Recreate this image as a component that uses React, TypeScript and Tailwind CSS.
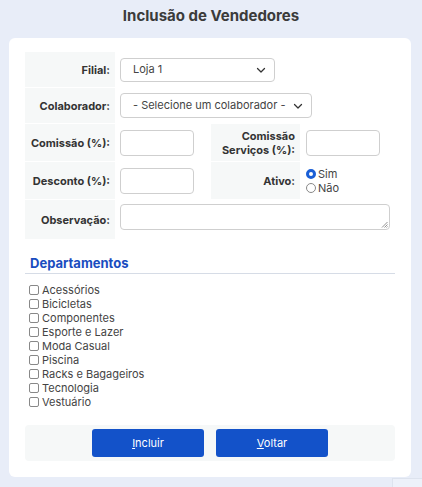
import React from 'react';

const DEPARTAMENTOS = [
  'Acessórios',
  'Bicicletas',
  'Componentes',
  'Esporte e Lazer',
  'Moda Casual',
  'Piscina',
  'Racks e Bagageiros',
  'Tecnologia',
  'Vestuário',
];

const Chevron = () => (
  <svg width="12" height="12" viewBox="0 0 24 24" fill="none" stroke="#333" strokeWidth="2.5" strokeLinecap="round" strokeLinejoin="round">
    <path d="M5 9l7 7 7-7" />
  </svg>
);

const Label: React.FC<{ children: React.ReactNode; className?: string }> = ({ children, className = '' }) => (
  <div className={`bg-[#f6f8f8] flex items-center justify-end pr-[5px] text-right font-bold text-[11px] leading-[14px] text-[#333] ${className}`}>
    {children}
  </div>
);

const App: React.FC = () => {
  return (
    <div className="relative min-h-[487px] w-[422px] bg-[#e8edf8] pt-[5px] font-['Inter',sans-serif] text-[#333]">
      <h1 className="text-center text-[15px] font-bold leading-[22px] text-[#3b3b3b]">Inclusão de Vendedores</h1>

      <div className="ml-[9px] mr-[11px] mt-[11px] rounded-md bg-white px-4 pt-[14px] pb-4">
        {/* Formulário */}
        <div className="grid grid-cols-[90px_96px_89px_1fr] gap-y-px">
          <Label className="h-[35px]">Filial:</Label>
          <div className="col-span-3 flex items-center pl-[5px]">
            <div className="flex h-[24px] w-[155px] items-center justify-between rounded border border-[#cfcfcf] pl-3 pr-[7px] text-[11px] text-[#444]">
              <span>Loja 1</span>
              <Chevron />
            </div>
          </div>

          <Label className="h-[35px]">Colaborador:</Label>
          <div className="col-span-3 flex items-center pl-[5px]">
            <div className="flex h-[25px] w-[192px] items-center justify-between rounded border border-[#cfcfcf] pl-3 pr-[7px] text-[11px] text-[#444]">
              <span>- Selecione um colaborador -</span>
              <Chevron />
            </div>
          </div>

          <Label className="h-[37px]">Comissão (%):</Label>
          <div className="flex items-center pl-[5px]">
            <div className="h-[26px] w-[74px] rounded border border-[#cfcfcf]" />
          </div>
          <Label className="h-[37px]">
            <span>
              Comissão
              <br />
              Serviços (%):
            </span>
          </Label>
          <div className="flex items-center pl-[6px]">
            <div className="h-[26px] w-[74px] rounded border border-[#cfcfcf]" />
          </div>

          <Label className="h-[37px]">Desconto (%):</Label>
          <div className="flex items-center pl-[5px]">
            <div className="h-[26px] w-[74px] rounded border border-[#cfcfcf]" />
          </div>
          <Label className="h-[37px]">Ativo:</Label>
          <div className="flex flex-col justify-center pl-[6px] text-[11px] leading-[14px] text-[#444]">
            <label className="flex items-center gap-[2px]">
              <span className="inline-block h-[10px] w-[10px] rounded-full border-[3px] border-[#1a5fd6] bg-white" />
              Sim
            </label>
            <label className="flex items-center gap-[2px]">
              <span className="inline-block h-[10px] w-[10px] rounded-full border border-[#888] bg-white" />
              Não
            </label>
          </div>

          <Label className="h-[39px]">Observação:</Label>
          <div className="col-span-3 pl-[5px] pt-[4px]">
            <div className="relative h-[26px] w-[270px] rounded border border-[#cfcfcf]">
              <svg className="absolute right-[1px] bottom-[1px]" width="7" height="7" viewBox="0 0 7 7" stroke="#777" strokeWidth="0.8">
                <path d="M1 6.5L6.5 1M3.5 6.5L6.5 3.5M5.5 6.5L6.5 5.5" />
              </svg>
            </div>
          </div>
        </div>

        {/* Departamentos */}
        <div className="mt-[16px] border-b border-[#d6dce6] pb-[2px] pl-[5px] text-[13px] font-bold leading-[16px] text-[#1a4dbf]">
          Departamentos
        </div>
        <ul className="mt-[9px] pl-[4px]">
          {DEPARTAMENTOS.map((d) => (
            <li key={d} className="flex h-[14px] items-center gap-[3px] text-[11px] text-[#444]">
              <span className="inline-block h-[10px] w-[10px] rounded-[2px] border border-[#888] bg-white" />
              {d}
            </li>
          ))}
        </ul>

        {/* Botões */}
        <div className="mt-[16px] flex h-[36px] items-center justify-center gap-3 rounded bg-[#f6f8f8]">
          <button className="h-[28px] w-[112px] rounded-[3px] bg-[#1352c9] text-[11px] text-white">
            <span className="underline">I</span>ncluir
          </button>
          <button className="h-[28px] w-[112px] rounded-[3px] bg-[#1352c9] text-[11px] text-white">
            <span className="underline">V</span>oltar
          </button>
        </div>
      </div>

      <div className="absolute right-0 top-[478px] h-[9px] w-[30px] border-l border-t border-[#dde3ee] bg-[#edf1fa]" />
    </div>
  );
};

export default App;
